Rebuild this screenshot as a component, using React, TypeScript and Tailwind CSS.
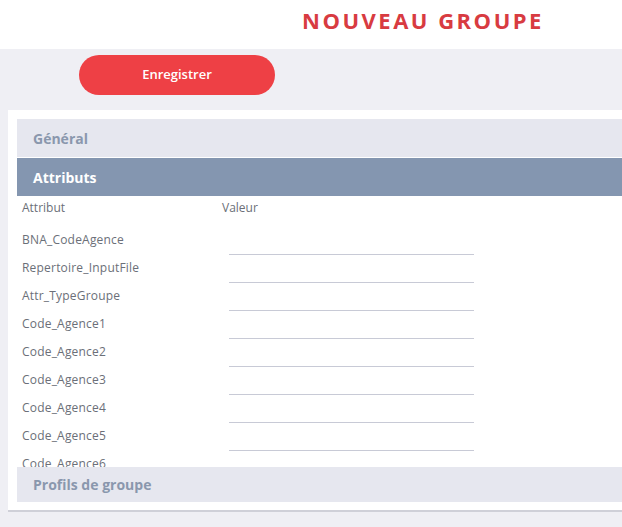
const rows = [
  'BNA_CodeAgence',
  'Repertoire_InputFile',
  'Attr_TypeGroupe',
  'Code_Agence1',
  'Code_Agence2',
  'Code_Agence3',
  'Code_Agence4',
  'Code_Agence5',
  'Code_Agence6',
];

export default function App() {
  return (
    <div
      className="h-[527px] w-[622px] overflow-hidden bg-[#efeff4]"
      style={{ fontFamily: '"Open Sans", "Noto Sans", sans-serif' }}
    >
      {/* header */}
      <header className="flex h-[49px] items-center bg-white pb-[8px] pl-[302px]">
        <h1 className="text-[22px] font-bold tracking-[2.5px] text-[#d83b41]">NOUVEAU GROUPE</h1>
      </header>

      {/* actions */}
      <div className="pl-[79px] pt-[6px]">
        <button className="flex h-[40px] w-[196px] items-center justify-center rounded-full bg-[#ee4045] text-[13px] font-semibold text-white">
          Enregistrer
        </button>
      </div>

      {/* panel */}
      <div className="ml-[8px] mt-[15px] border-b-2 border-[#cfd0d8] bg-white pb-[8px] pl-[9px] pt-[9px]">
        <div className="flex h-[38px] items-center bg-[#e6e7ef] pl-[16px] text-[14px] font-bold text-[#8a97ad]">
          Général
        </div>
        <div className="mt-px flex h-[38px] items-center bg-[#8496b0] pl-[16px] text-[14px] font-bold text-white">
          Attributs
        </div>

        {/* attribute table */}
        <div className="h-[271px] overflow-hidden">
          <div className="flex h-[30px] pt-[5px] text-[12px] leading-[14px] text-[#6b6f78]">
            <span className="w-[205px] pl-[5px]">Attribut</span>
            <span>Valeur</span>
          </div>
          {rows.map((name) => (
            <div key={name} className="relative h-[28px]">
              <div className="pl-[5px] pt-[7px] text-[12px] leading-[14px] tracking-[0.2px] text-[#6b6f78]">{name}</div>
              <div className="absolute left-[212px] top-[28px] h-px w-[245px] bg-[#c8cad6]" />
            </div>
          ))}
        </div>

        <div className="flex h-[35px] items-center bg-[#e6e7ef] pl-[16px] text-[14px] font-bold text-[#8a97ad]">
          Profils de groupe
        </div>
      </div>
    </div>
  );
}
